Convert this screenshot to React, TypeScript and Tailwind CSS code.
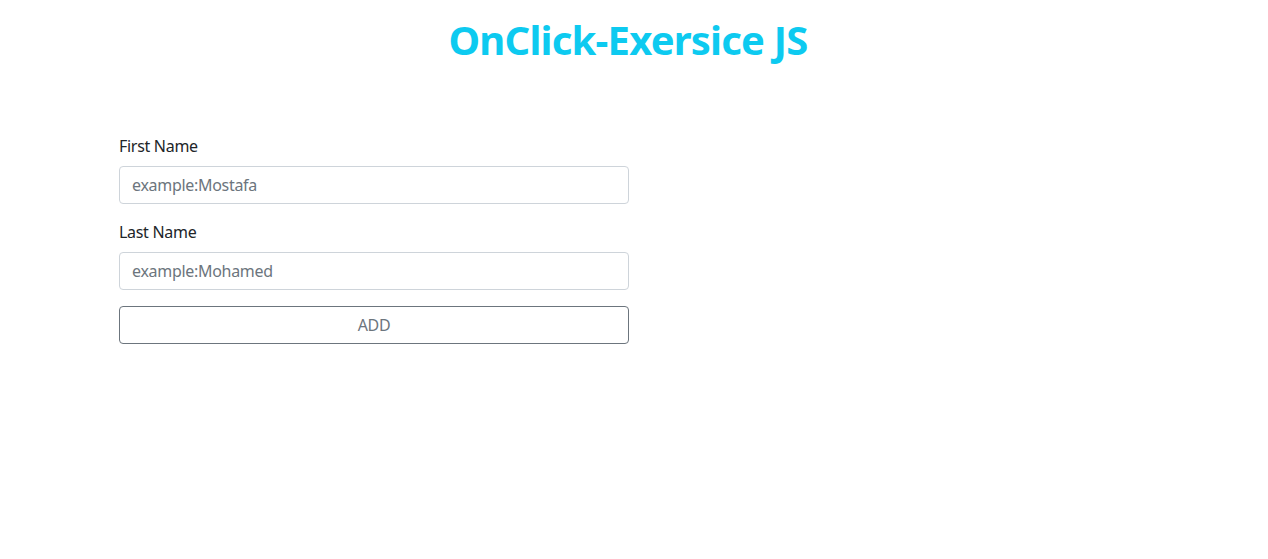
export default function App() {
  return (
    <div className="min-h-screen bg-white text-[#212529]" style={{ fontFamily: '"Noto Sans", "Open Sans", sans-serif' }}>
      {/* Title */}
      <h1 className="pr-3 pt-4 text-center text-[40px] font-bold leading-[48px] tracking-[-0.8px] text-[#0dcaf0]">
        OnClick-Exersice JS
      </h1>

      {/* Form */}
      <form className="ml-[119px] mt-[70px] w-[510px] tracking-[-0.3px]" onSubmit={(e) => e.preventDefault()}>
        <div className="mb-4">
          <label className="mb-2 block text-base leading-6">First Name</label>
          <input
            type="text"
            placeholder="example:Mostafa"
            className="block h-[38px] w-full rounded border border-[#ced4da] px-3 text-base text-[#212529] placeholder:text-[#6c757d] focus:outline-none"
          />
        </div>
        <div className="mb-4">
          <label className="mb-2 block text-base leading-6">Last Name</label>
          <input
            type="text"
            placeholder="example:Mohamed"
            className="block h-[38px] w-full rounded border border-[#ced4da] px-3 text-base text-[#212529] placeholder:text-[#6c757d] focus:outline-none"
          />
        </div>
        <button
          type="submit"
          className="block h-[38px] w-full rounded border border-[#6c757d] bg-white text-base text-[#6c757d]"
        >
          ADD
        </button>
      </form>
    </div>
  );
}
